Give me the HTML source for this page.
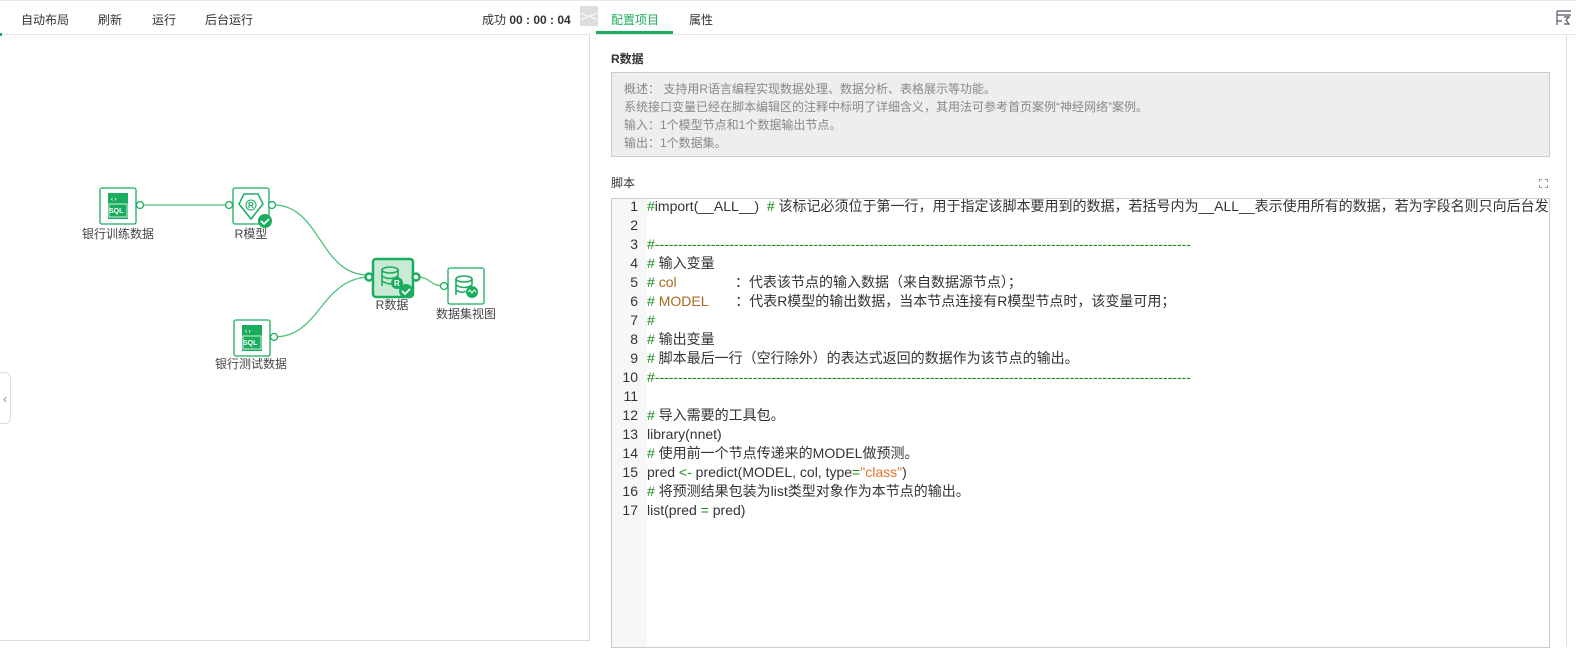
<!DOCTYPE html>
<html><head><meta charset="utf-8"><style>
*{margin:0;padding:0;box-sizing:border-box}
body{width:1576px;height:646px;overflow:hidden;background:#fff;font-family:"Liberation Sans","Noto Sans CJK SC",sans-serif;position:relative;color:#333}
.abs{position:absolute}
.tb{font-size:12px;color:#333;top:11px}
.lbl{font-size:12px;color:#444;white-space:nowrap;transform:translateX(-50%)}
.code{left:647px;top:197px;font-size:14px;line-height:19px;white-space:pre;color:#333}
.ln{left:611px;top:197px;width:27px;text-align:right;font-size:14px;line-height:19px;color:#333;white-space:pre}
.g{color:#1a8a1a}.o{color:#a56a1f}.s{color:#e8742a}
.desc{font-size:12px;color:#888;line-height:18px}
</style></head><body>
<div class="abs" style="left:0;top:0;width:1576px;height:1px;background:#e8e8ee"></div>
<div class="abs" style="left:0;top:34px;width:590px;height:1px;background:#e4e4ea"></div>
<div class="abs" style="left:0;top:33px;width:2px;height:3px;background:#1aad5e"></div>
<div class="abs" style="left:0;top:35px;width:590px;height:606px;border-right:1px solid #ddd;border-bottom:1px solid #ddd"></div>
<div class="abs tb" style="left:21px">自动布局</div>
<div class="abs tb" style="left:98px">刷新</div>
<div class="abs tb" style="left:152px">运行</div>
<div class="abs tb" style="left:205px">后台运行</div>
<div class="abs tb" style="left:482px">成功 <b>00 : 00 : 04</b></div>
<div class="abs" style="left:580px;top:6px;width:18px;height:20px;background:#ddd;color:#fff;font-size:14px;line-height:20px;text-align:center">&gt;&lt;</div>
<div class="abs" style="left:0;top:372px;width:11px;height:52px;border:1px solid #ddd;border-left:none;border-radius:0 6px 6px 0;color:#888;font-size:12px;line-height:52px;text-align:center;background:#fff">‹</div>

<svg class="abs" style="left:0;top:0" width="590" height="640">
<g fill="none" stroke="#4cc07c" stroke-width="1.3">
<path d="M143 205 H228"/>
<path d="M274 205 C320 205,320 275,368 275"/>
<path d="M274 337 C320 337,320 280,368 277"/>
<path d="M418 277 C430 277,430 286,444 286"/>
</g>
<g fill="#fff" stroke="#1aad5e" stroke-width="1.3">
<rect x="100" y="188" width="36" height="36" rx="2"/>
<rect x="233" y="188" width="36" height="36" rx="2"/>
<rect x="234" y="320" width="36" height="36" rx="2"/>
<rect x="448" y="268" width="36" height="36" rx="2"/>
<circle cx="140" cy="205" r="3.5"/><circle cx="229" cy="205" r="3.5"/><circle cx="272" cy="205" r="3.5"/>
<circle cx="274" cy="337" r="3.5"/><circle cx="444" cy="286" r="3.5"/>
</g>
<rect x="373" y="259" width="40" height="38" rx="3" fill="#c9ebd5" stroke="#1aad5e" stroke-width="2.5"/>
<circle cx="369" cy="277" r="3.5" fill="#fff" stroke="#1aad5e" stroke-width="2.5"/>
<circle cx="416" cy="277" r="3.5" fill="#fff" stroke="#1aad5e" stroke-width="2.5"/>
<g fill="#1aad5e"><rect x="108" y="193" width="20" height="26"/><rect x="242" y="325" width="20" height="26"/></g>
<g fill="#fff" font-size="7" font-weight="bold" font-family="Liberation Sans"><text x="109" y="213">SQL</text><text x="243" y="345">SQL</text><text x="111" y="201" font-size="6">‹ ›</text><text x="245" y="333" font-size="6">‹ ›</text></g>
<rect x="109" y="204" width="18" height="13" fill="none" stroke="#fff" stroke-width="0.8"/>
<rect x="243" y="336" width="18" height="13" fill="none" stroke="#fff" stroke-width="0.8"/>
<path d="M244 194 L258 194 L263 204 L251 219 L239 204 Z" fill="none" stroke="#1aad5e" stroke-width="1.5"/>
<circle cx="251" cy="205" r="5" fill="none" stroke="#1aad5e"/><text x="248" y="208" font-size="8" fill="#1aad5e" font-family="Liberation Sans" font-weight="bold">R</text>
<circle cx="265" cy="221" r="7" fill="#1aad5e"/><path d="M261 221 l3 3 l5 -5" stroke="#fff" stroke-width="1.8" fill="none"/>
<g fill="none" stroke="#1aad5e" stroke-width="1.6"><ellipse cx="390" cy="270" rx="8" ry="3"/><path d="M382 270 V286 M398 270 V278 M382 276 q8 5 16 0 M382 281 q8 5 12 1"/></g>
<circle cx="397" cy="283" r="6" fill="#1aad5e"/><text x="394" y="286" font-size="8" fill="#fff" font-family="Liberation Sans" font-weight="bold">R</text>
<circle cx="406" cy="291" r="7" fill="#1aad5e"/><path d="M402 291 l3 3 l5 -5" stroke="#fff" stroke-width="1.8" fill="none"/>
<g fill="none" stroke="#1aad5e" stroke-width="1.6"><ellipse cx="464" cy="279" rx="8" ry="3"/><path d="M456 279 V295 M472 279 V285 M456 285 q8 5 16 0 M456 290 q6 4 10 1"/></g>
<circle cx="472" cy="292" r="6" fill="#1aad5e"/><path d="M468 292 l2 -2 l2 3 l2 -3 l2 2" stroke="#fff" fill="none"/>
</svg>
<div class="abs lbl" style="left:118px;top:225px">银行训练数据</div>
<div class="abs lbl" style="left:251px;top:225px">R模型</div>
<div class="abs lbl" style="left:392px;top:296px">R数据</div>
<div class="abs lbl" style="left:466px;top:305px">数据集视图</div>
<div class="abs lbl" style="left:251px;top:355px">银行测试数据</div>

<div class="abs" style="left:596px;top:34px;width:980px;height:1px;background:#e4e4ea"></div>
<div class="abs" style="left:611px;top:11px;font-size:12px;color:#1aad5e">配置项目</div>
<div class="abs" style="left:689px;top:11px;font-size:12px;color:#333">属性</div>
<div class="abs" style="left:596px;top:31px;width:77px;height:3px;background:#1aad5e"></div>
<svg class="abs" style="left:1556px;top:10px" width="16" height="16"><path d="M1 1 H15 M1 1 V15 M1 5 H15 M1 11 H6 M8 7 L13 7 L10 10 L13 14 L8 14" fill="none" stroke="#556" stroke-width="1.2"/></svg>
<div class="abs" style="left:1566px;top:36px;width:1px;height:610px;background:#ddd"></div>
<div class="abs" style="left:611px;top:50px;font-size:12px;font-weight:bold;color:#333">R数据</div>
<div class="abs desc" style="left:611px;top:72px;width:939px;height:85px;background:#eee;border:1px solid #ccc;padding:7px 0 0 12px">概述： 支持用R语言编程实现数据处理、数据分析、表格展示等功能。<br>系统接口变量已经在脚本编辑区的注释中标明了详细含义，其用法可参考首页案例“神经网络”案例。<br>输入：1个模型节点和1个数据输出节点。<br>输出：1个数据集。</div>
<div class="abs" style="left:611px;top:174px;font-size:12px;color:#333">脚本</div>
<div class="abs" style="left:1539px;top:179px;width:9px;height:9px;border:1px dashed #99a"></div>
<div class="abs" style="left:611px;top:198px;width:939px;height:450px;border:1px solid #ccc;overflow:hidden">
<div class="abs" style="left:0;top:0;width:35px;height:450px;background:#f7f7f7"></div>
</div>
<div class="abs ln">1
2
3
4
5
6
7
8
9
10
11
12
13
14
15
16
17</div>
<div class="abs code" style="width:902px;overflow:hidden"><span class="g">#</span>import(__ALL__)  <span class="g">#</span> 该标记必须位于第一行，用于指定该脚本要用到的数据，若括号内为__ALL__表示使用所有的数据，若为字段名则只向后台发送

<span class="g">#-------------------------------------------------------------------------------------------------------------------</span>
<span class="g">#</span> 输入变量
<span class="g">#</span> <span class="o">col</span>               ：代表该节点的输入数据（来自数据源节点）；
<span class="g">#</span> <span class="o">MODEL</span>       ：代表R模型的输出数据，当本节点连接有R模型节点时，该变量可用；
<span class="g">#</span>
<span class="g">#</span> 输出变量
<span class="g">#</span> 脚本最后一行（空行除外）的表达式返回的数据作为该节点的输出。
<span class="g">#-------------------------------------------------------------------------------------------------------------------</span>

<span class="g">#</span> 导入需要的工具包。
library(nnet)
<span class="g">#</span> 使用前一个节点传递来的MODEL做预测。
pred <span class="g">&lt;-</span> predict(MODEL, col, type<span class="g">=</span><span class="s">"class"</span>)
<span class="g">#</span> 将预测结果包装为list类型对象作为本节点的输出。
list(pred <span class="g">=</span> pred)</div>
</body></html>
